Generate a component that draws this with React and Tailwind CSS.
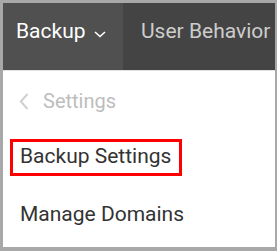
import React from 'react';

const font = { fontFamily: 'Roboto, "Liberation Sans", sans-serif' };

const App = () => {
    return (
        <div className="w-[277px] h-[251px] bg-[#a8a8a8] pt-[3px] pl-[3px] pr-[2px] pb-[4px]" style={font}>
            <div className="w-full h-full bg-white flex flex-col overflow-hidden">
                {/* Top nav */}
                <div className="h-[67px] flex bg-[#444444] shrink-0">
                    <div className="w-[120px] bg-[#505050] flex items-start pt-[16px] pl-[13px]">
                        <span className="text-[21px] leading-[25px] text-white whitespace-nowrap">Backup</span>
                        <svg width="12" height="7" viewBox="0 0 12 7" className="ml-[8px] mt-[12px]" fill="none">
                            <polyline points="1,1 6,5.5 11,1" stroke="#ffffff" strokeWidth="1.6" />
                        </svg>
                    </div>
                    <div className="flex-1 pt-[16px] pl-[18px] overflow-hidden">
                        <span className="text-[21px] leading-[25px] text-[#cdcdcd] whitespace-nowrap">User Behavior</span>
                    </div>
                </div>
                <div className="h-px bg-[#e2e2e2] shrink-0"></div>

                {/* Menu */}
                <div className="flex flex-col items-start pl-[7px]">
                    <div className="flex items-center mt-[18px] pl-[9px]">
                        <svg width="10" height="17" viewBox="0 0 10 17" fill="none">
                            <polyline points="8.5,1 1.8,8.5 8.5,16" stroke="#d0d0d0" strokeWidth="2" />
                        </svg>
                        <span className="ml-[14px] text-[20px] leading-[24px] text-[#bdbdbd]">Settings</span>
                    </div>
                    <div className="mt-[26px] border-[3px] border-[#ff0000] pt-[2px] pb-[4px] pl-[7px] pr-[8px]">
                        <span className="block text-[21px] leading-[25px] text-[#333333] whitespace-nowrap">Backup Settings</span>
                    </div>
                    <div className="mt-[26px] pl-[10px]">
                        <span className="block text-[21px] leading-[25px] text-[#333333] whitespace-nowrap">Manage Domains</span>
                    </div>
                </div>
            </div>
        </div>
    );
};

export default App;
